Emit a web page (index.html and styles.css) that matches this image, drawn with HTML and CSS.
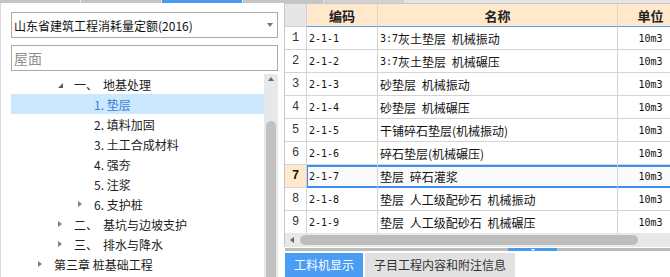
FILE: index.html
```html
<!DOCTYPE html>
<html lang="zh-CN">
<head>
<meta charset="UTF-8">
<meta name="viewport" content="width=device-width, initial-scale=1.0">
<title>定额库</title>
<link rel="stylesheet" href="styles.css">
</head>
<body>

<div class="topbar">
<span class="seg"></span>
<span class="seg"></span>
<span class="seg seg-on"></span>
<span class="seg"></span>
<span class="seg seg-light"></span>
</div>

<div class="main">
<div class="side">
<div class="select">
<span>山东省建筑工程消耗量定额(2016)</span>
<span class="caret"></span>
</div>
<input class="search" type="text" placeholder="屋面">

<div class="tree-wrap">
<ul class="tree">
<li class="lv1"><span class="tw open"></span><span class="no">一、</span>地基处理</li>
<li class="lv2 sel"><span class="tw"></span>1. 垫层</li>
<li class="lv2"><span class="tw"></span>2. 填料加固</li>
<li class="lv2"><span class="tw"></span>3. 土工合成材料</li>
<li class="lv2"><span class="tw"></span>4. 强夯</li>
<li class="lv2"><span class="tw"></span>5. 注浆</li>
<li class="lv2"><span class="tw closed"></span>6. 支护桩</li>
<li class="lv1"><span class="tw closed"></span><span class="no">二、</span>基坑与边坡支护</li>
<li class="lv1"><span class="tw closed"></span><span class="no">三、</span>排水与降水</li>
<li class="lv0"><span class="tw closed"></span>第三章 桩基础工程</li>
</ul>
<div class="vscroll">
<span class="up"></span>
<span class="thumb"></span>
</div>
</div>
</div>

<div class="content">
<div class="gridbox">
<div class="grid">
<div class="row head">
<div class="cell c-rn"></div>
<div class="cell c-code">编码</div>
<div class="cell c-name">名称</div>
<div class="cell c-unit">单位</div>
</div>
<div class="row">
<div class="cell c-rn">1</div>
<div class="cell c-code">2-1-1</div>
<div class="cell c-name"><span class="mono">3:7</span>灰土垫层 机械振动</div>
<div class="cell c-unit">10m3</div>
</div>
<div class="row">
<div class="cell c-rn">2</div>
<div class="cell c-code">2-1-2</div>
<div class="cell c-name"><span class="mono">3:7</span>灰土垫层 机械碾压</div>
<div class="cell c-unit">10m3</div>
</div>
<div class="row">
<div class="cell c-rn">3</div>
<div class="cell c-code">2-1-3</div>
<div class="cell c-name">砂垫层 机械振动</div>
<div class="cell c-unit">10m3</div>
</div>
<div class="row">
<div class="cell c-rn">4</div>
<div class="cell c-code">2-1-4</div>
<div class="cell c-name">砂垫层 机械碾压</div>
<div class="cell c-unit">10m3</div>
</div>
<div class="row">
<div class="cell c-rn">5</div>
<div class="cell c-code">2-1-5</div>
<div class="cell c-name">干铺碎石垫层(机械振动)</div>
<div class="cell c-unit">10m3</div>
</div>
<div class="row">
<div class="cell c-rn">6</div>
<div class="cell c-code">2-1-6</div>
<div class="cell c-name">碎石垫层(机械碾压)</div>
<div class="cell c-unit">10m3</div>
</div>
<div class="row cur">
<div class="cell c-rn">7</div>
<div class="cell c-code">2-1-7</div>
<div class="cell c-name">垫层 碎石灌浆</div>
<div class="cell c-unit">10m3</div>
</div>
<div class="row">
<div class="cell c-rn">8</div>
<div class="cell c-code">2-1-8</div>
<div class="cell c-name">垫层 人工级配砂石 机械振动</div>
<div class="cell c-unit">10m3</div>
</div>
<div class="row">
<div class="cell c-rn">9</div>
<div class="cell c-code">2-1-9</div>
<div class="cell c-name">垫层 人工级配砂石 机械碾压</div>
<div class="cell c-unit">10m3</div>
</div>
</div>
<div class="hscroll">
<span class="left"></span>
<span class="hthumb"></span>
</div>
</div>

<div class="splitter"><span class="handle"></span></div>

<div class="tabs">
<div class="tab on">工料机显示</div>
<div class="tab">子目工程内容和附注信息</div>
</div>
</div>
</div>

</body>
</html>
```

FILE: styles.css
```css
* {
box-sizing: border-box;
}

body {
margin: 0;
width: 670px;
height: 277px;
overflow: hidden;
background-color: #ffffff;
font-family: "Noto Sans CJK SC", sans-serif;
font-size: 12px;
color: #222;
}

/* strip at the top */
.topbar {
display: flex;
height: 3px;
background-color: #e4e4e4;
}

.seg {
width: 80px;
margin-right: 1px;
background-color: #c4c4c4;
}

.seg-on {
background-color: #4a9bef;
}

.seg-light {
background-color: #d2d2d2;
}

.main {
display: flex;
height: 274px;
}

/* left: quota library tree */
.side {
width: 284px;
flex: none;
display: flex;
flex-direction: column;
border-left: 1px solid #dcdcdc;
padding: 9px 6px 0 10px;
}

.select {
height: 26px;
border: 1px solid #ababab;
display: flex;
align-items: center;
justify-content: space-between;
padding: 0 4px 0 2px;
color: #111;
}

.caret {
width: 0;
height: 0;
border-left: 3.5px solid transparent;
border-right: 3.5px solid transparent;
border-top: 4px solid #777;
}

.search {
display: block;
width: 100%;
height: 26px;
margin-top: 7px;
border: 1px solid #ababab;
padding: 0 2px;
font-family: "Noto Sans CJK SC", sans-serif;
font-size: 14px;
outline: none;
}

.search::placeholder {
color: #8f8f8f;
}

.tree-wrap {
display: flex;
flex: 1;
margin-top: 3px;
overflow: hidden;
}

.tree {
flex: 1;
list-style: none;
margin: 0;
padding: 0;
}

.tree li {
display: flex;
align-items: center;
height: 20px;
white-space: nowrap;
}

.tree .lv0 { padding-left: 27px; }
.tree .lv1 { padding-left: 47px; }
.tree .lv2 { padding-left: 67px; }

.tree .sel {
background-color: #cce8ff;
color: #3a7fd3;
}

.tw {
flex: none;
width: 16px;
height: 20px;
display: flex;
align-items: center;
}

.tw.closed::before {
content: "";
width: 0;
height: 0;
border-left: 4px solid #808080;
border-top: 3.5px solid transparent;
border-bottom: 3.5px solid transparent;
}

.tw.open::before {
content: "";
width: 0;
height: 0;
margin-top: 3px;
border-left: 5px solid transparent;
border-bottom: 5px solid #5a5a5a;
}

.no {
margin-right: 5px;
}

.vscroll {
width: 14px;
flex: none;
display: flex;
flex-direction: column;
align-items: center;
background-color: #e8e8e8;
}

.up {
margin-top: 3px;
width: 0;
height: 0;
border-left: 3.5px solid transparent;
border-right: 3.5px solid transparent;
border-bottom: 4px solid #6a6a6a;
}

.thumb {
width: 10px;
flex: 1;
margin-top: 40px;
background-color: #c1c1c1;
border-radius: 5px 5px 0 0;
}

/* right: item grid */
.content {
flex: 1;
min-width: 0;
display: flex;
flex-direction: column;
overflow: hidden;
}

.gridbox {
border-left: 1px solid #c6c6c6;
}

.grid {
height: 230px;
border-top: 1px solid #c8c8c8;
overflow: hidden;
}

.row {
display: flex;
width: max-content;
}

.cell {
flex: none;
height: 23px;
display: flex;
align-items: center;
padding: 0 2px;
border-right: 1px solid #d4d4d4;
border-bottom: 1px solid #d4d4d4;
white-space: nowrap;
overflow: hidden;
}

.c-rn {
width: 22px;
justify-content: center;
font-family: "Liberation Mono", monospace;
font-size: 12px;
color: #333;
}

.c-code {
width: 71px;
font-family: "DejaVu Sans Mono", monospace;
font-size: 10px;
color: #111;
}

.c-name {
width: 240px;
word-spacing: 3px;
color: #111;
}

.c-unit {
width: 66px;
justify-content: center;
font-family: "DejaVu Sans Mono", monospace;
font-size: 10px;
color: #111;
}

.mono {
font-family: "DejaVu Sans Mono", monospace;
font-size: 10px;
word-spacing: 0;
}

.head .cell {
justify-content: center;
background-color: #ffe8cb;
border-right-color: #dcd4c8;
border-bottom-color: #5c9de4;
font-family: "Noto Sans CJK SC", sans-serif;
font-size: 13px;
font-weight: bold;
color: #222;
}

.head .c-rn {
background-color: #e6e6e6;
border-right-color: #cfcfcf;
border-bottom-color: #cfcfcf;
}

.cur .cell {
background-color: #fafafa;
border-bottom-color: #3d8ef0;
box-shadow: inset 0 2px 0 #3d8ef0, inset 0 -1px 0 #3d8ef0;
}

.cur .c-code {
box-shadow: inset 0 2px 0 #3d8ef0, inset 0 -1px 0 #3d8ef0, inset 1px 0 0 #3d8ef0;
}

.cur .c-rn {
background-color: #ffe8cb;
border-bottom-color: #d4d4d4;
box-shadow: none;
font-weight: bold;
color: #111;
}

.hscroll {
height: 14px;
display: flex;
align-items: center;
padding-left: 5px;
background-color: #e8e8e8;
}

.left {
width: 0;
height: 0;
border-right: 4px solid #666;
border-top: 3.5px solid transparent;
border-bottom: 3.5px solid transparent;
}

.hthumb {
width: 338px;
height: 10px;
margin-left: 6px;
border-radius: 5px;
background-color: #bdbdbd;
}

.splitter {
height: 5px;
margin: 1px 0 0 1px;
background-color: #bcbcbc;
display: flex;
}

.handle {
width: 49px;
margin-left: 223px;
background-color: #4a9bef;
display: flex;
justify-content: center;
padding-top: 1px;
}

.handle::before {
content: "";
width: 0;
height: 0;
border-left: 2.5px solid transparent;
border-right: 2.5px solid transparent;
border-top: 2px solid #ffffff;
}

.tabs {
display: flex;
gap: 2px;
margin-top: 2px;
padding-left: 1px;
}

.tab {
height: 24px;
line-height: 24px;
padding: 0 9px;
background-color: #e1e1e1;
color: #333;
white-space: nowrap;
}

.tab.on {
background-color: #4a9cf5;
color: #ffffff;
}
```
